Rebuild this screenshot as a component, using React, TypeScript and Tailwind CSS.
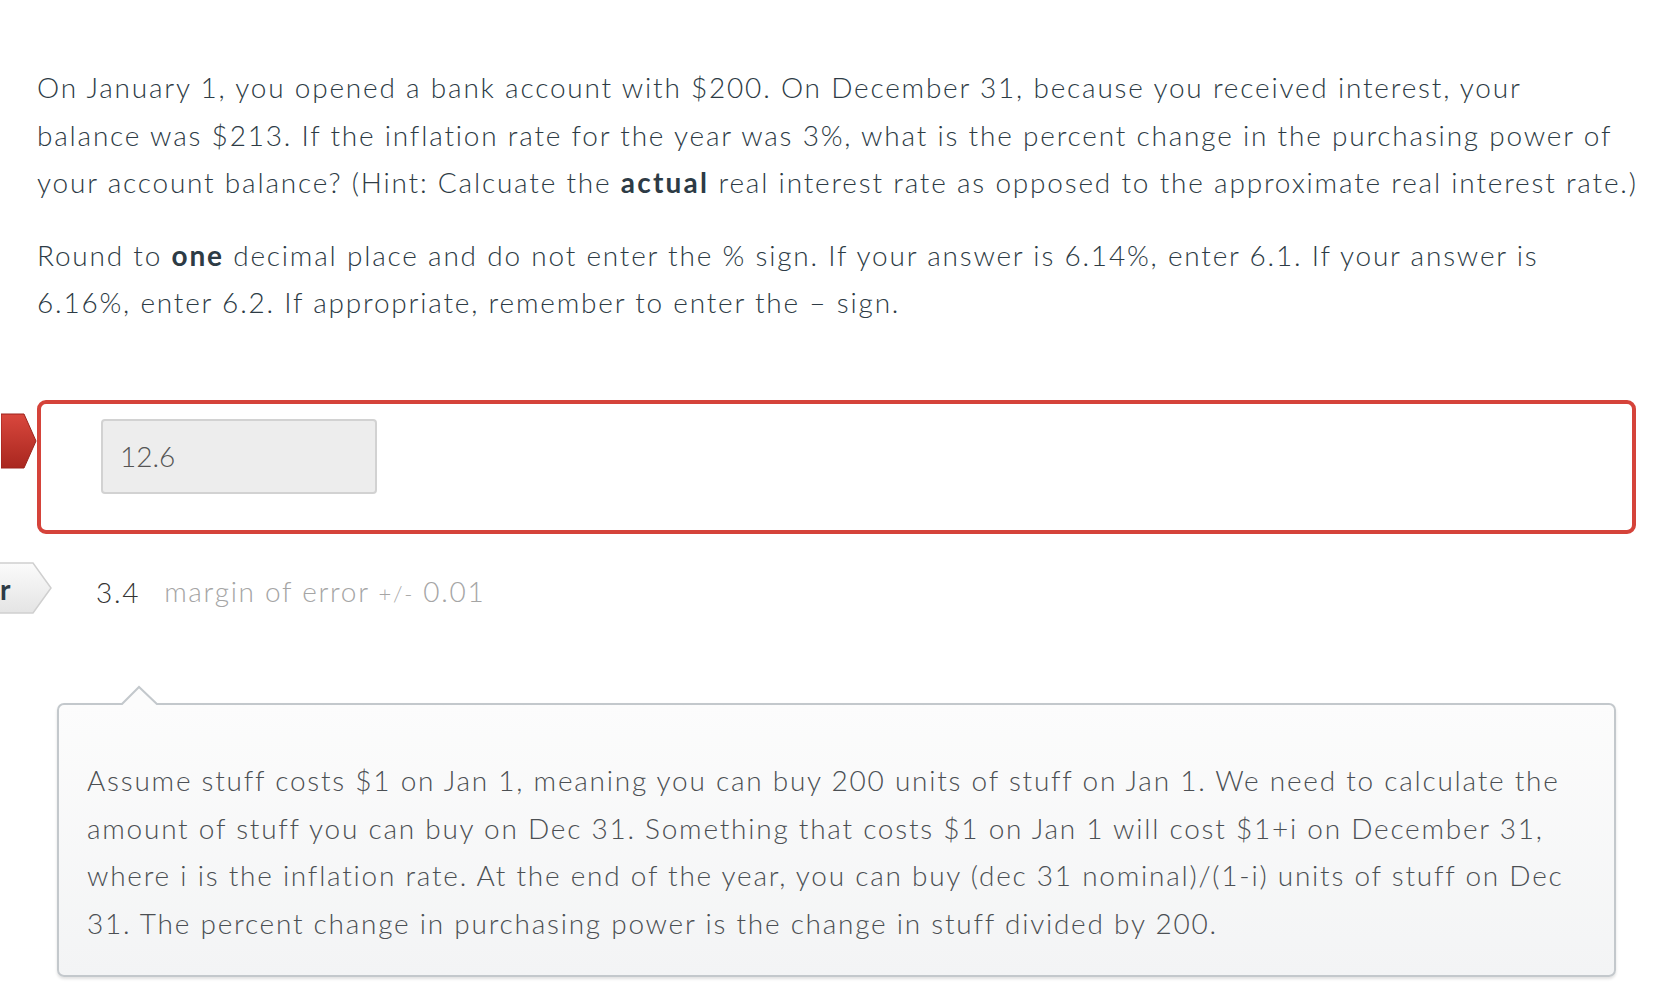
import React from "react";

export default function App() {
  return (
    <div className="min-h-screen bg-white font-['Lato','Liberation_Sans',sans-serif] font-light tracking-[1.7px] text-[28px] leading-[47.6px] text-[#2d3b45]">
      <div className="pl-[37px] pt-[64px]">
        {/* Question text */}
        <div className="w-[1610px] tracking-[1.8px]">
          <p>
            On January 1, you opened a bank account with $200. On December 31, because you received interest, your
            <br />
            balance was $213. If the inflation rate for the year was 3%, what is the percent change in the purchasing
            power of your account balance? (Hint: Calcuate the <strong className="font-bold tracking-[2.2px]">actual</strong> real
            interest rate as opposed to the approximate real interest rate.)
          </p>
          <p className="mt-[25px] w-[1580px]">
            Round to <strong className="font-bold">one</strong> decimal place and do not enter the % sign. If your
            answer is 6.14%, enter 6.1. If your answer is 6.16%, enter 6.2. If appropriate, remember to enter the –
            sign.
          </p>
        </div>

        {/* Student answer */}
        <div className="relative mt-[73px] w-[1599px] h-[134px] rounded-[9px] border-4 border-[#d5433a] pl-[60px] pt-[15px]">
          <svg
            className="absolute left-[-40px] top-[9px]"
            width="36"
            height="56"
            viewBox="0 0 36 56"
          >
            <defs>
              <linearGradient id="wrong" x1="0" y1="0" x2="0" y2="1">
                <stop offset="0" stopColor="#d9473d" />
                <stop offset="1" stopColor="#a9271f" />
              </linearGradient>
            </defs>
            <path d="M0 1 H23 L35 28 L23 55 H0 Z" fill="url(#wrong)" stroke="#9c231c" strokeWidth="1" />
          </svg>
          <div className="w-[276px] h-[75px] rounded-[4px] border-2 border-[#d2d2d2] bg-[#ededed] flex items-center pl-[17px] text-[#555] text-[28px] tracking-normal">
            12.6
          </div>
        </div>

        {/* Correct answer */}
        <div className="relative mt-[33px] flex items-center h-[51px]">
          <svg
            className="absolute left-[-38px] top-[-5px]"
            width="54"
            height="52"
            viewBox="0 0 54 52"
          >
            <defs>
              <linearGradient id="right" x1="0" y1="0" x2="0" y2="1">
                <stop offset="0" stopColor="#fbfbfb" />
                <stop offset="1" stopColor="#e4e4e4" />
              </linearGradient>
            </defs>
            <path d="M0 1 H34 L52 26 L34 51 H0 Z" fill="url(#right)" stroke="#cfcfcf" strokeWidth="1.5" />
          </svg>
          <span className="absolute left-[-37px] top-[-1px] font-bold text-[#2d3b45]">r</span>
          <span className="ml-[59px] text-[#333]">3.4</span>
          <span className="ml-[24px] text-[#a5a5a5]">
            margin of error <span className="text-[22px]">+/-</span> 0.01
          </span>
        </div>

        {/* Comment bubble */}
        <div className="relative mt-[85px] ml-[20px] w-[1559px] rounded-[7px] border-2 border-[#c3c8cc] bg-gradient-to-b from-[#fcfcfc] to-[#f3f4f5] pl-[28px] pr-[36px] pt-[52px] pb-[28px] text-[#4b4f53] tracking-[1.76px] shadow-[0_2px_3px_rgba(0,0,0,0.12)]">
          <svg
            className="absolute left-[61px] top-[-20px]"
            width="40"
            height="22"
            viewBox="0 0 40 22"
          >
            <path d="M0 21 L19 2 L39 21" fill="#fcfcfc" stroke="#c3c8cc" strokeWidth="2" />
            <rect x="0" y="20" width="40" height="3" fill="#fcfcfc" />
          </svg>
          <p>
            Assume stuff costs $1 on Jan 1, meaning you can buy 200 units of stuff on Jan 1. We need to calculate the
            amount of stuff you can buy on Dec 31. Something that costs $1 on Jan 1 will cost $1+i on December 31,
            where i is the inflation rate. At the end of the year, you can buy (dec 31 nominal)/(1-i) units of stuff
            on Dec 31. The percent change in purchasing power is the change in stuff divided by 200.
          </p>
        </div>
      </div>
    </div>
  );
}
